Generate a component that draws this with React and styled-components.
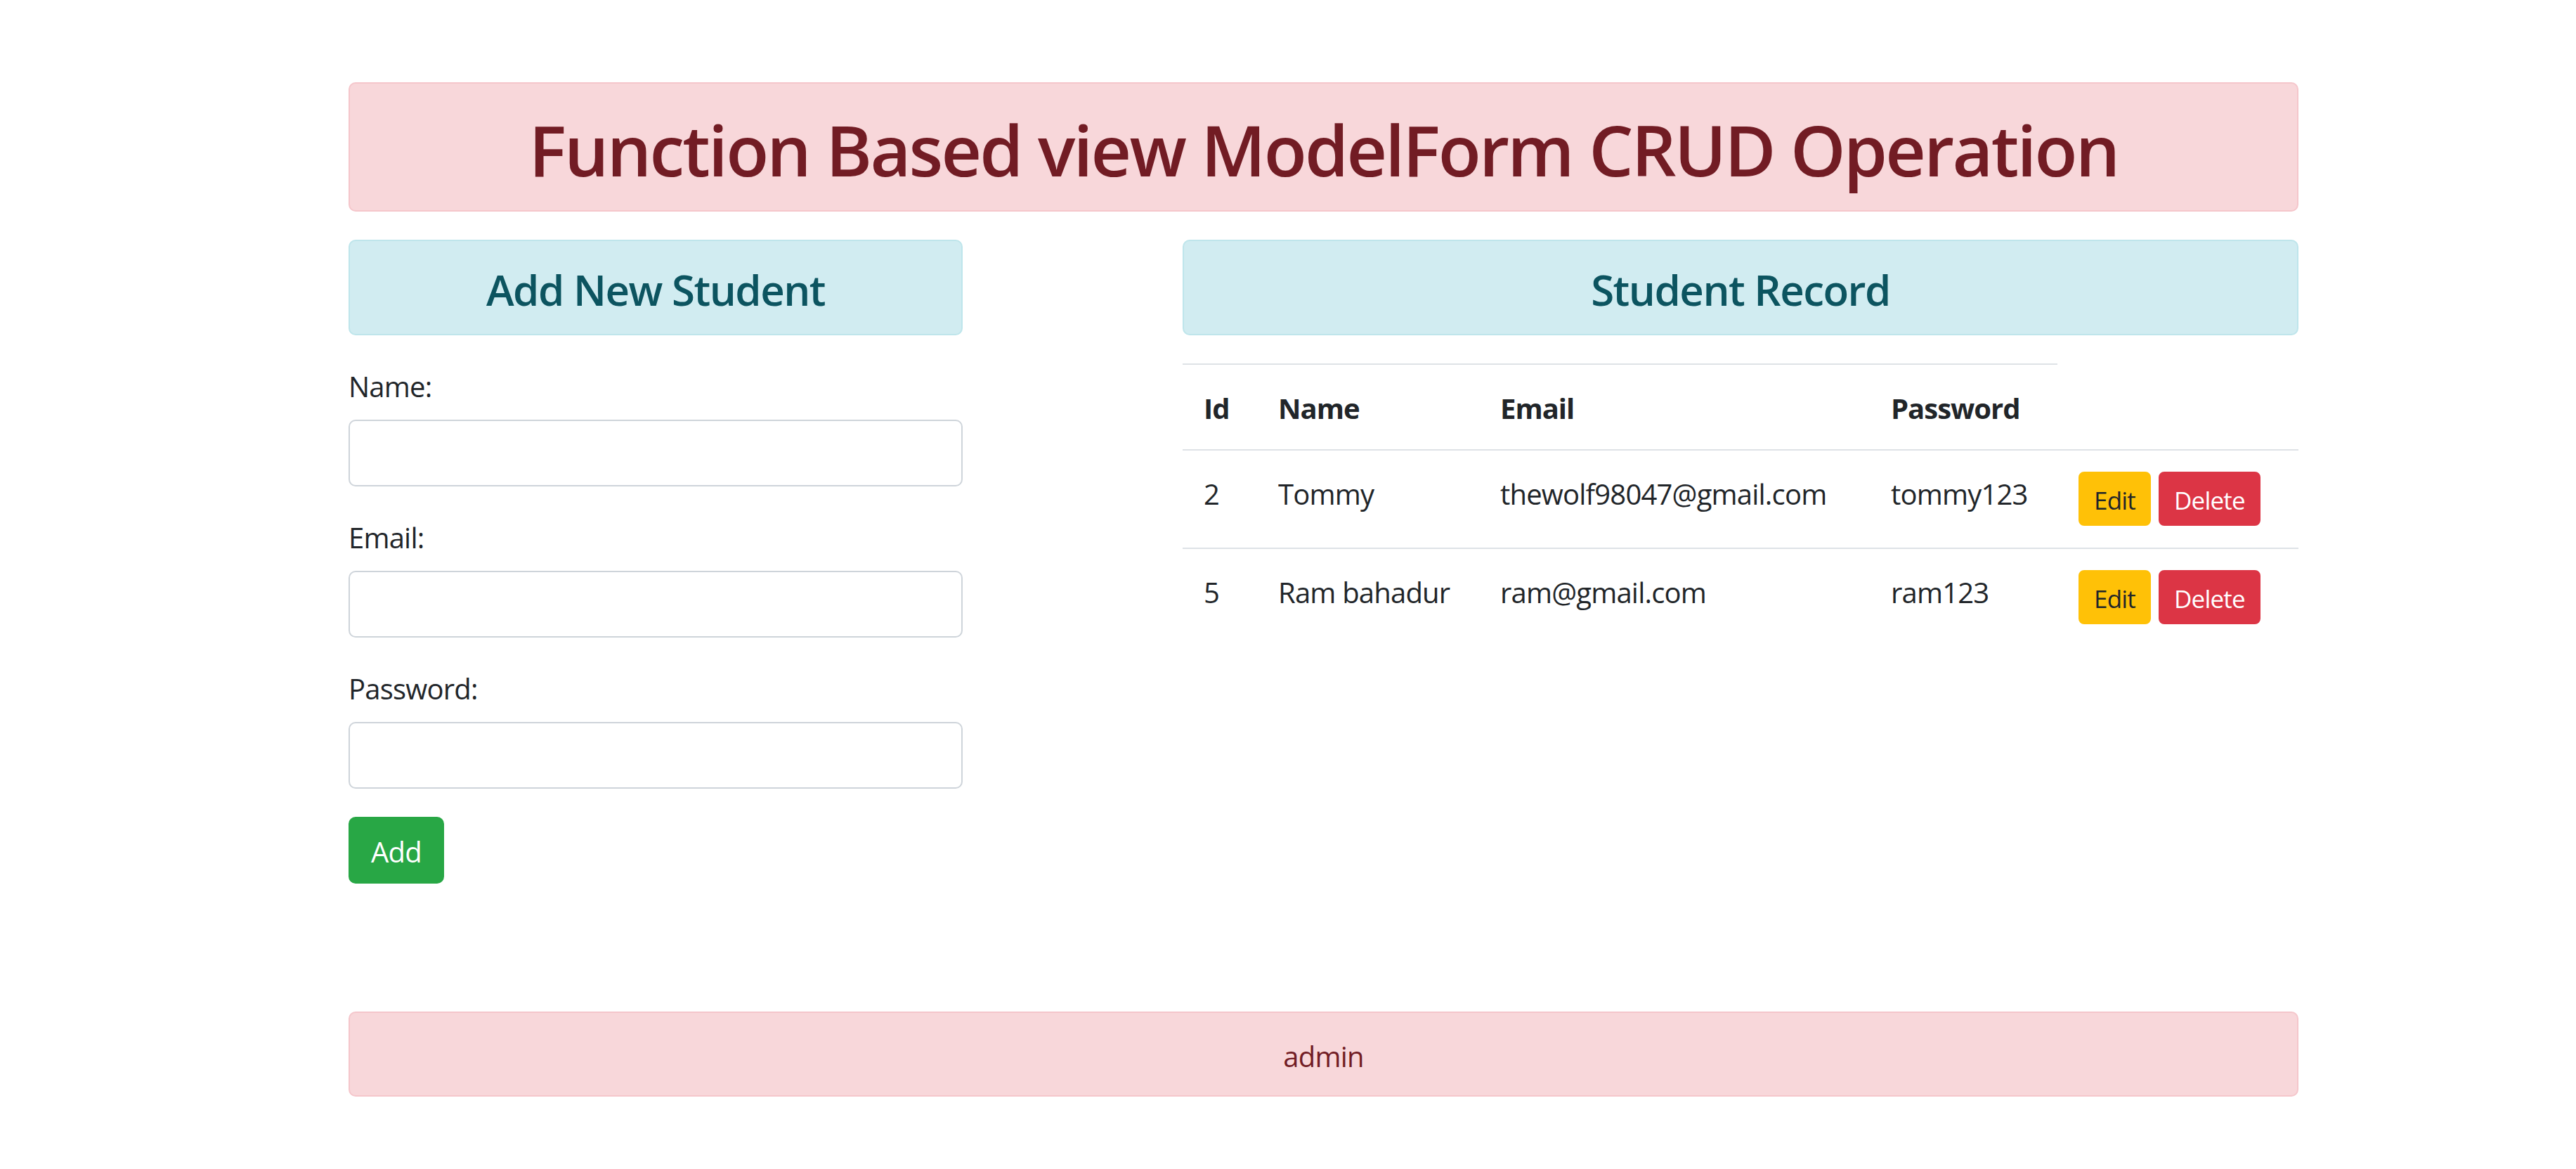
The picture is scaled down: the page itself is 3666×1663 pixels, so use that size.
import React from 'react';
import styled, { createGlobalStyle, css } from 'styled-components';

const GlobalStyle = createGlobalStyle`
  html, body {
    margin: 0;
    padding: 0;
    background: #fff;
  }
  body {
    font-family: "Open Sans", "Noto Sans", sans-serif;
    color: #212529;
    font-size: 40px;
    line-height: 60px;
  }
  * {
    box-sizing: border-box;
  }
`;

const variants = {
  danger: css`
    background: #f8d7da;
    border-color: #f5c6cb;
    color: #721c24;
  `,
  info: css`
    background: #d1ecf1;
    border-color: #bee5eb;
    color: #0c5460;
  `,
};

const Page = styled.div`
  width: 2775px;
  margin-left: 496px;
  padding-top: 117px;
  padding-bottom: 100px;
`;

// the text sits a few px lower in the original font, so top padding > bottom
const Alert = styled.div`
  border: 2px solid transparent;
  border-radius: 10px;
  padding: 33px 50px 27px;
  margin-bottom: 40px;
  text-align: center;
  ${props => variants[props.variant]}
`;

const Title = styled.h1`
  margin: 0;
  font-size: 100px;
  line-height: 120px;
  font-weight: 600;
  letter-spacing: -2.8px;
`;

const SectionTitle = styled.h4`
  margin: 0;
  font-size: 60px;
  line-height: 72px;
  font-weight: 600;
  letter-spacing: -1.5px;
`;

const Row = styled.div`
  display: flex;
  align-items: flex-start;
`;

const Column = styled.div`
  width: ${props => props.width}px;
  margin-left: ${props => props.offset || 0}px;
`;

const FormGroup = styled.div`
  margin-bottom: 40px;
`;

const Label = styled.label`
  display: block;
  padding-top: 3px;
  margin-bottom: 17px;
  font-size: 40px;
  line-height: 60px;
  letter-spacing: -0.8px;
`;

const Input = styled.input`
  display: block;
  width: 100%;
  height: 95px;
  padding: 15px 30px;
  font-size: 40px;
  font-family: inherit;
  color: #495057;
  background: #fff;
  border: 2px solid #ced4da;
  border-radius: 10px;
  outline: none;
`;

const buttonColors = {
  success: css`
    background: #28a745;
    border-color: #28a745;
    color: #fff;
  `,
  warning: css`
    background: #ffc107;
    border-color: #ffc107;
    color: #212529;
  `,
  danger: css`
    background: #dc3545;
    border-color: #dc3545;
    color: #fff;
  `,
};

const Button = styled.button`
  display: inline-block;
  font-family: inherit;
  border: 2px solid transparent;
  cursor: pointer;
  letter-spacing: -0.8px;
  ${props => buttonColors[props.color]}
  ${props =>
    props.small
      ? css`
          font-size: 35px;
          line-height: 55px;
          padding: 11px 20px 7px;
          border-radius: 8px;
        `
      : css`
          font-size: 40px;
          line-height: 60px;
          padding: 18px 30px 13px;
          border-radius: 10px;
        `}
`;

const Actions = styled.div`
  display: flex;
  gap: 11px;
`;

const Table = styled.table`
  width: 100%;
  table-layout: fixed;
  border-collapse: collapse;
`;

const Cell = styled.td`
  padding: 32px 30px 28px;
  vertical-align: top;
  text-align: left;
  border-top: 2px solid #dee2e6;
  font-size: 40px;
  line-height: 60px;
  letter-spacing: -0.8px;
  white-space: nowrap;
`;

const ActionCell = styled(Cell)`
  padding-top: 30px;
  padding-bottom: 31px;
`;

const HeadCell = styled(Cell).attrs({ as: 'th' })`
  font-weight: 700;
  letter-spacing: -1px;
`;

const Footer = styled(Alert)`
  margin-top: 182px;
  margin-bottom: 0;
  font-size: 40px;
  line-height: 57px;
  letter-spacing: -0.8px;
`;

const students = [
  { id: 2, name: 'Tommy', email: 'thewolf98047@gmail.com', password: 'tommy123' },
  { id: 5, name: 'Ram bahadur', email: 'ram@gmail.com', password: 'ram123' },
];

const App = () => {
  return (
    <>
      <GlobalStyle />
      <Page>
        <Alert variant="danger">
          <Title>Function Based view ModelForm CRUD Operation</Title>
        </Alert>
        <Row>
          <Column width={874}>
            <Alert variant="info">
              <SectionTitle>Add New Student</SectionTitle>
            </Alert>
            <form onSubmit={e => e.preventDefault()}>
              <FormGroup>
                <Label htmlFor="name">Name:</Label>
                <Input id="name" type="text" />
              </FormGroup>
              <FormGroup>
                <Label htmlFor="email">Email:</Label>
                <Input id="email" type="email" />
              </FormGroup>
              <FormGroup>
                <Label htmlFor="password">Password:</Label>
                <Input id="password" type="password" />
              </FormGroup>
              <Button color="success" type="submit">
                Add
              </Button>
            </form>
          </Column>
          <Column width={1588} offset={313}>
            <Alert variant="info">
              <SectionTitle>Student Record</SectionTitle>
            </Alert>
            <Table>
              <colgroup>
                <col style={{ width: 106 }} />
                <col style={{ width: 316 }} />
                <col style={{ width: 556 }} />
                <col style={{ width: 267 }} />
                <col style={{ width: 343 }} />
              </colgroup>
              <tbody>
                <tr>
                  <HeadCell>Id</HeadCell>
                  <HeadCell>Name</HeadCell>
                  <HeadCell>Email</HeadCell>
                  <HeadCell>Password</HeadCell>
                </tr>
                {students.map(st => (
                  <tr key={st.id}>
                    <Cell>{st.id}</Cell>
                    <Cell>{st.name}</Cell>
                    <Cell>{st.email}</Cell>
                    <Cell>{st.password}</Cell>
                    <ActionCell>
                      <Actions>
                        <Button small color="warning">
                          Edit
                        </Button>
                        <Button small color="danger">
                          Delete
                        </Button>
                      </Actions>
                    </ActionCell>
                  </tr>
                ))}
              </tbody>
            </Table>
          </Column>
        </Row>
        <Footer variant="danger">admin</Footer>
      </Page>
    </>
  );
};

export default App;
